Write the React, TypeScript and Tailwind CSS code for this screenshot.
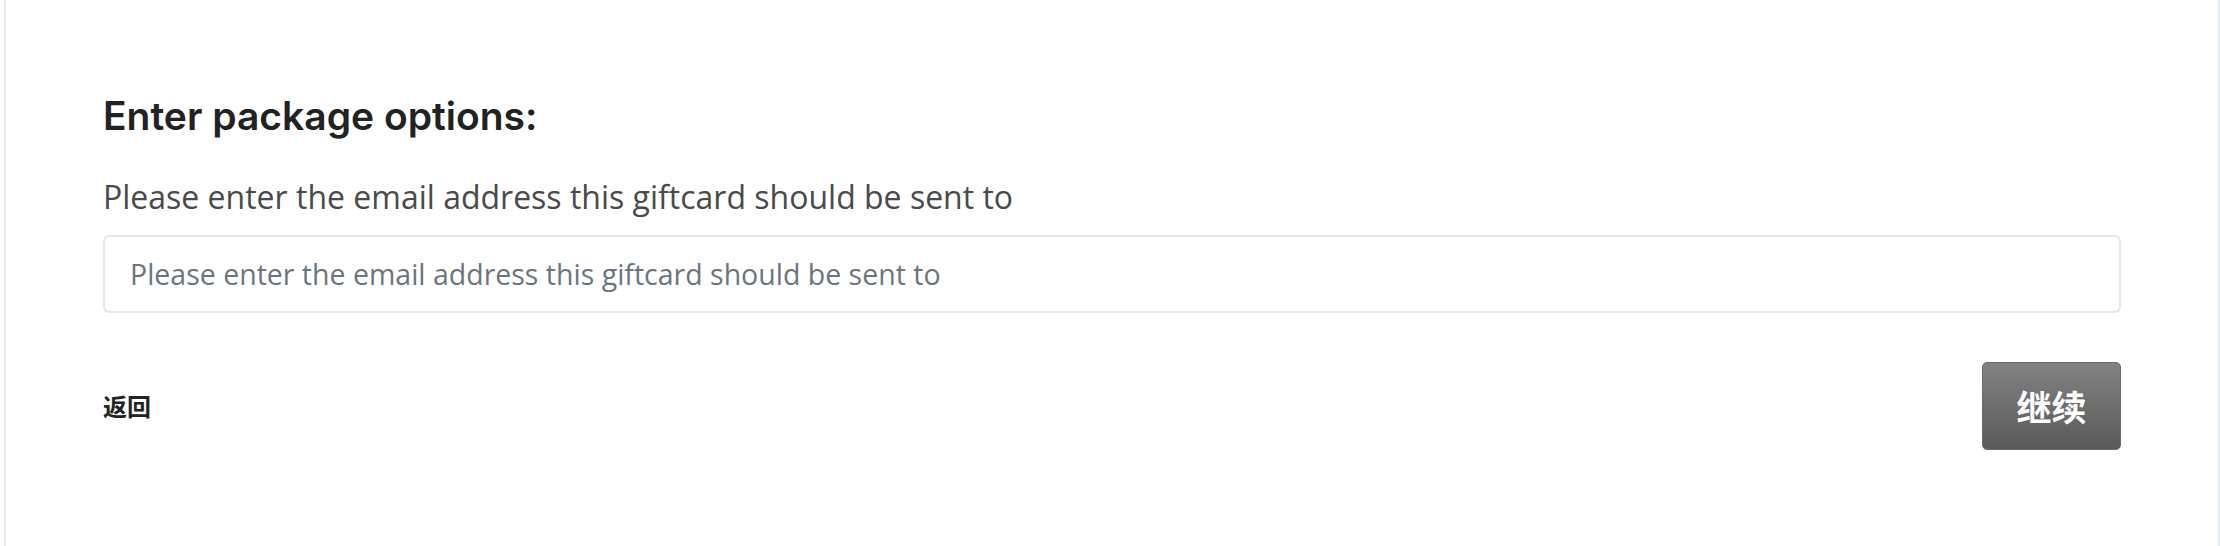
export default function App() {
  return (
    <div className="min-h-[546px] bg-white pl-[4px]">
      <div className="min-h-[546px] border-x-2 border-[#e3e8f0] px-[97px] pt-[93px]">
        {/* Heading */}
        <h2 className="font-['Inter',sans-serif] text-[39px] font-semibold leading-[46px] text-[#222]">
          Enter package options:
        </h2>

        {/* Email field */}
        <label className="mt-[36px] block font-['Open_Sans',sans-serif] text-[32px] leading-[44px] text-[#4a4a4a]">
          Please enter the email address this giftcard should be sent to
        </label>
        <input
          type="email"
          placeholder="Please enter the email address this giftcard should be sent to"
          className="mt-[16px] block h-[78px] w-full rounded-[6px] border-2 border-[#e3e8f0] bg-white px-[25px] font-['Open_Sans',sans-serif] text-[28.5px] text-[#333] placeholder-[#6c757d] outline-none"
        />

        {/* Actions */}
        <div className="mt-[49px] flex items-center justify-between">
          <a className="font-['Noto_Sans_CJK_SC',sans-serif] text-[24px] font-bold text-[#222]">
            返回
          </a>
          <button className="flex h-[88px] w-[139px] items-center justify-center rounded-[5px] border border-[#6a6a6a] bg-gradient-to-b from-[#828282] to-[#5a5a5a] font-['Noto_Sans_CJK_SC',sans-serif] text-[35px] font-bold text-white">
            继续
          </button>
        </div>
      </div>
    </div>
  );
}
